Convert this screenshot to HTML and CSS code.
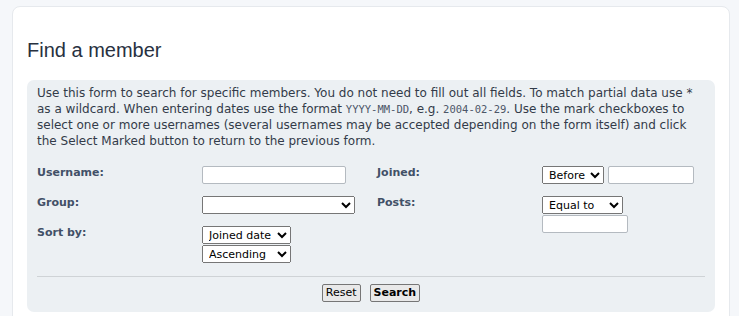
FILE: index.html
```html
<!DOCTYPE html>
<html lang="en">
<head>
<meta charset="utf-8">
<title>Find a member</title>
<link rel="stylesheet" href="styles.css">
</head>
<body>
<div class="wrap">
  <h2 class="title">Find a member</h2>
  <form class="panel">
    <p class="intro">Use this form to search for specific members. You do not need to fill out all fields. To match partial data use * as a wildcard. When entering dates use the format <kbd>YYYY-MM-DD</kbd>, e.g. <kbd>2004-02-29</kbd>. Use the mark checkboxes to select one or more usernames (several usernames may be accepted depending on the form itself) and click the Select Marked button to return to the previous form.</p>
    <div class="columns">
      <div class="col">
        <div class="row">
          <label class="label">Username:</label>
          <div class="ctrl"><input type="text" class="inputbox w-user"></div>
        </div>
        <div class="row">
          <label class="label">Group:</label>
          <div class="ctrl"><select class="sel w-group"><option></option></select></div>
        </div>
        <div class="row">
          <label class="label">Sort by:</label>
          <div class="ctrl stack">
            <select class="sel w-sort"><option>Joined date</option></select>
            <select class="sel w-sort"><option>Ascending</option></select>
          </div>
        </div>
      </div>
      <div class="col">
        <div class="row">
          <label class="label">Joined:</label>
          <div class="ctrl inline">
            <select class="sel w-before"><option>Before</option></select>
            <input type="text" class="inputbox w-date">
          </div>
        </div>
        <div class="row">
          <label class="label">Posts:</label>
          <div class="ctrl stack">
            <select class="sel w-equal"><option>Equal to</option></select>
            <input type="text" class="inputbox w-date">
          </div>
        </div>
      </div>
    </div>
    <hr class="divider">
    <div class="actions">
      <button type="reset" class="btn">Reset</button>
      <button type="button" class="btn btn-bold">Search</button>
    </div>
  </form>
</div>
</body>
</html>
```
FILE: styles.css
```css
html, body {
  margin: 0;
  padding: 0;
  background: #f5f7fa;
}
body {
  padding: 6px 0 0 12px;
  font-family: "DejaVu Sans", Verdana, sans-serif;
  font-size: 11px;
  color: #28313f;
}
.wrap {
  width: 688px;
  background: #fff;
  border: 1px solid #e6e9ed;
  border-radius: 8px;
  padding: 31px 14px 20px 14px;
}
.title {
  margin: 0 0 18px 0;
  font-family: "Liberation Sans", Arial, sans-serif;
  font-weight: normal;
  font-size: 20px;
  line-height: 24px;
  color: #28313f;
}
.panel {
  background: #ecf0f3;
  border-radius: 7px;
  padding: 5px 10px 10px 10px;
}
.intro {
  margin: 0 0 17px 0;
  font-size: 12px;
  line-height: 16px;
  color: #333b49;
}
kbd {
  font-family: "DejaVu Sans Mono", monospace;
  font-size: 10.5px;
  color: #4c5668;
}
.columns {
  display: grid;
  grid-template-columns: 340px 1fr;
}
.col {
  display: flex;
  flex-direction: column;
}
.row {
  display: flex;
  align-items: flex-start;
  margin-bottom: 12px;
}
.label {
  flex: 0 0 165px;
  font-weight: bold;
  color: #425067;
  line-height: 16px;
  margin-top: -1px;
}
.ctrl {
  display: flex;
}
.stack {
  flex-direction: column;
  gap: 1px;
}
.inline {
  gap: 4px;
}
.inputbox {
  box-sizing: border-box;
  height: 18px;
  border: 1px solid #b4bac0;
  border-radius: 2px;
  background: #fff;
  padding: 1px 3px;
  font-family: "DejaVu Sans", sans-serif;
  font-size: 11px;
  margin: 0;
}
.sel {
  box-sizing: border-box;
  height: 18px;
  margin: 0;
  font-family: "DejaVu Sans", sans-serif;
  font-size: 11px;
  color: #000;
  padding: 0 0 0 2px;
}
.w-user { width: 144px; }
.w-group { width: 153px; }
.w-sort { width: 89px; }
.w-before { width: 62px; }
.w-equal { width: 81px; }
.w-date { width: 86px; }
.divider {
  margin: 0;
  border: 0;
  border-top: 1px solid #cfd3d6;
  height: 0;
  margin-top: 1px;
}
.actions {
  display: flex;
  justify-content: center;
  gap: 9px;
  margin-top: 7px;
}
.btn {
  box-sizing: border-box;
  height: 18px;
  padding: 0 3px;
  margin: 0;
  font-family: "DejaVu Sans", sans-serif;
  font-size: 11px;
  color: #000;
  background: #e9e9e9;
  border: 1px solid #767676;
  border-radius: 2px;
  line-height: 14px;
}
.btn-bold {
  font-weight: bold;
}
```
